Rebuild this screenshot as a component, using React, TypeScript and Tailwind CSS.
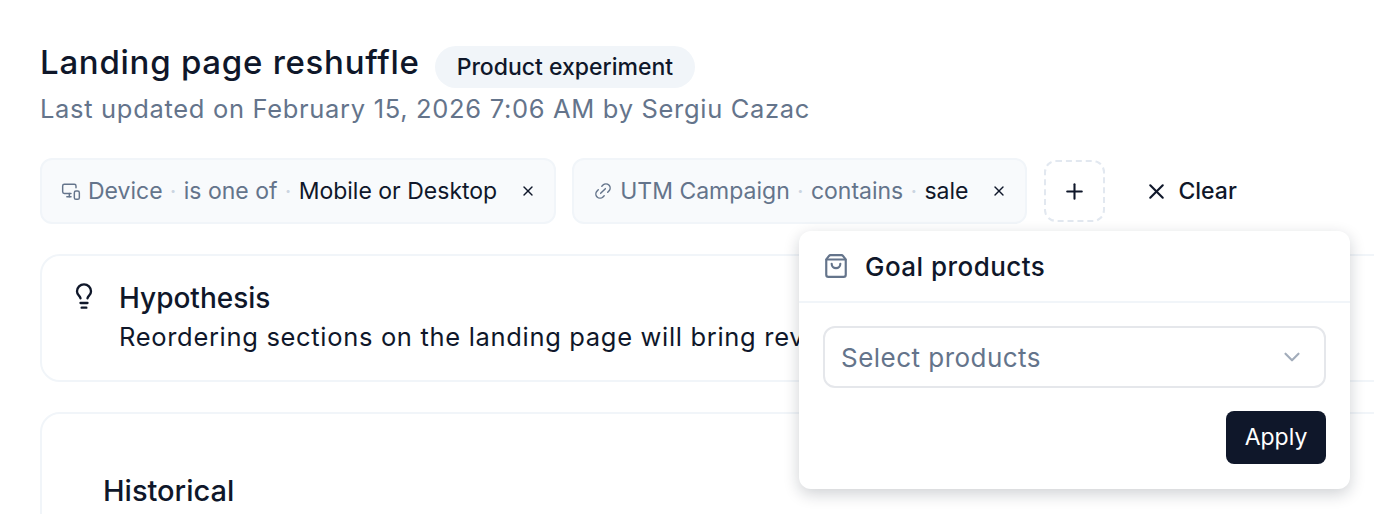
import { ChevronDown, Lightbulb, Link2, MonitorSmartphone, Plus, ShoppingBag, X } from 'lucide-react'

function FilterChip({ icon, field, op, value }: { icon: React.ReactNode; field: string; op: string; value: string }) {
  return (
    <div className="flex h-[66px] items-center rounded-[12px] border-2 border-[#f1f5f9] bg-[#f8fafc] pl-[19px] pr-[18px] text-[23px] text-[#64748b]">
      {icon}
      <span className="ml-[7px]">{field}</span>
      <span className="mx-[7.25px] text-[#cbd5e1]">·</span>
      <span>{op}</span>
      <span className="mx-[7.25px] text-[#cbd5e1]">·</span>
      <span className="text-[#0f172a]">{value}</span>
      <X className="ml-[23px] h-[16px] w-[16px] text-[#0f172a]" strokeWidth={2} />
    </div>
  )
}

export default function App() {
  return (
    <div className="relative h-[514px] w-[1374px] overflow-hidden bg-white pl-[40px] pt-[37px] font-['Inter',sans-serif]">
      <div className="flex h-[50px] items-center">
        <h1 className="text-[33px] font-medium leading-[42px] tracking-[0.73px] text-[#0f172a]">Landing page reshuffle</h1>
        <span className="ml-[15px] mt-[9px] rounded-full bg-[#f1f5f9] px-[22px] py-[5px] text-[23px] font-medium leading-[32px] text-[#0f172a]">
          Product experiment
        </span>
      </div>
      <p className="mt-[5px] text-[25.5px] leading-[34px] tracking-[0.68px] text-[#64748b]">
        Last updated on February 15, 2026 7:06 AM by Sergiu Cazac
      </p>

      <div className="mt-[32px] flex items-center">
        <FilterChip
          icon={<MonitorSmartphone className="h-[20px] w-[20px]" strokeWidth={1.75} />}
          field="Device"
          op="is one of"
          value="Mobile or Desktop"
        />
        <div className="ml-[16px]">
          <FilterChip
            icon={<Link2 className="h-[20px] w-[20px] -rotate-45" strokeWidth={1.75} />}
            field="UTM Campaign"
            op="contains"
            value="sale"
          />
        </div>
        <div className="ml-[17px] flex h-[62px] w-[61px] items-center justify-center rounded-[12px] border-2 border-dashed border-[#e2e8f0] text-[#0f172a]">
          <Plus className="h-[25px] w-[25px]" strokeWidth={2} />
        </div>
        <button className="ml-[39px] flex items-center gap-[9px] text-[23px] font-medium text-[#0f172a]">
          <X className="h-[25px] w-[25px]" strokeWidth={2} />
          Clear
        </button>
      </div>

      <div className="mt-[30px] flex h-[128px] w-[1400px] rounded-[20px] border-2 border-[#f1f5f9] pl-[28px] pt-[23px]">
        <Lightbulb className="mt-[3px] h-[28px] w-[28px] text-[#0f172a]" strokeWidth={2} />
        <div className="ml-[21px] text-[#0f172a]">
          <p className="text-[28px] font-medium leading-[38px]">Hypothesis</p>
          <p className="mt-[1px] whitespace-nowrap text-[25.5px] leading-[38px] tracking-[0.68px]">
            Reordering sections on the landing page will bring rev
          </p>
        </div>
      </div>

      <div className="mt-[30px] h-[200px] w-[1400px] rounded-[20px] border-2 border-[#f1f5f9] pl-[61px] pt-[57px]">
        <p className="text-[29px] font-medium leading-[40px] text-[#0f172a]">Historical</p>
      </div>

      <div className="absolute left-[799px] top-[231px] w-[551px] overflow-hidden rounded-[12px] bg-white shadow-[0_5px_16px_rgba(15,23,42,0.2)]">
        <div className="flex h-[72px] items-center border-b-2 border-[#f1f5f9] pl-[24px]">
          <ShoppingBag className="h-[26px] w-[26px] text-[#64748b]" strokeWidth={2} />
          <span className="ml-[16px] text-[26px] font-medium tracking-[0.46px] text-[#0f172a]">Goal products</span>
        </div>
        <div className="flex flex-col items-end px-[24px] pb-[25px] pt-[23px]">
          <div className="flex h-[62px] w-full items-center justify-between rounded-[12px] border-2 border-[#e5e7eb] pl-[16px] pr-[19px]">
            <span className="text-[26px] tracking-[0.47px] text-[#64748b]">Select products</span>
            <ChevronDown className="h-[26px] w-[26px] text-[#a3adbb]" strokeWidth={2} />
          </div>
          <button className="mt-[23px] flex h-[53px] w-[100px] items-center justify-center rounded-[8px] bg-[#0f172a] text-[23px] text-white">
            Apply
          </button>
        </div>
      </div>
    </div>
  )
}
